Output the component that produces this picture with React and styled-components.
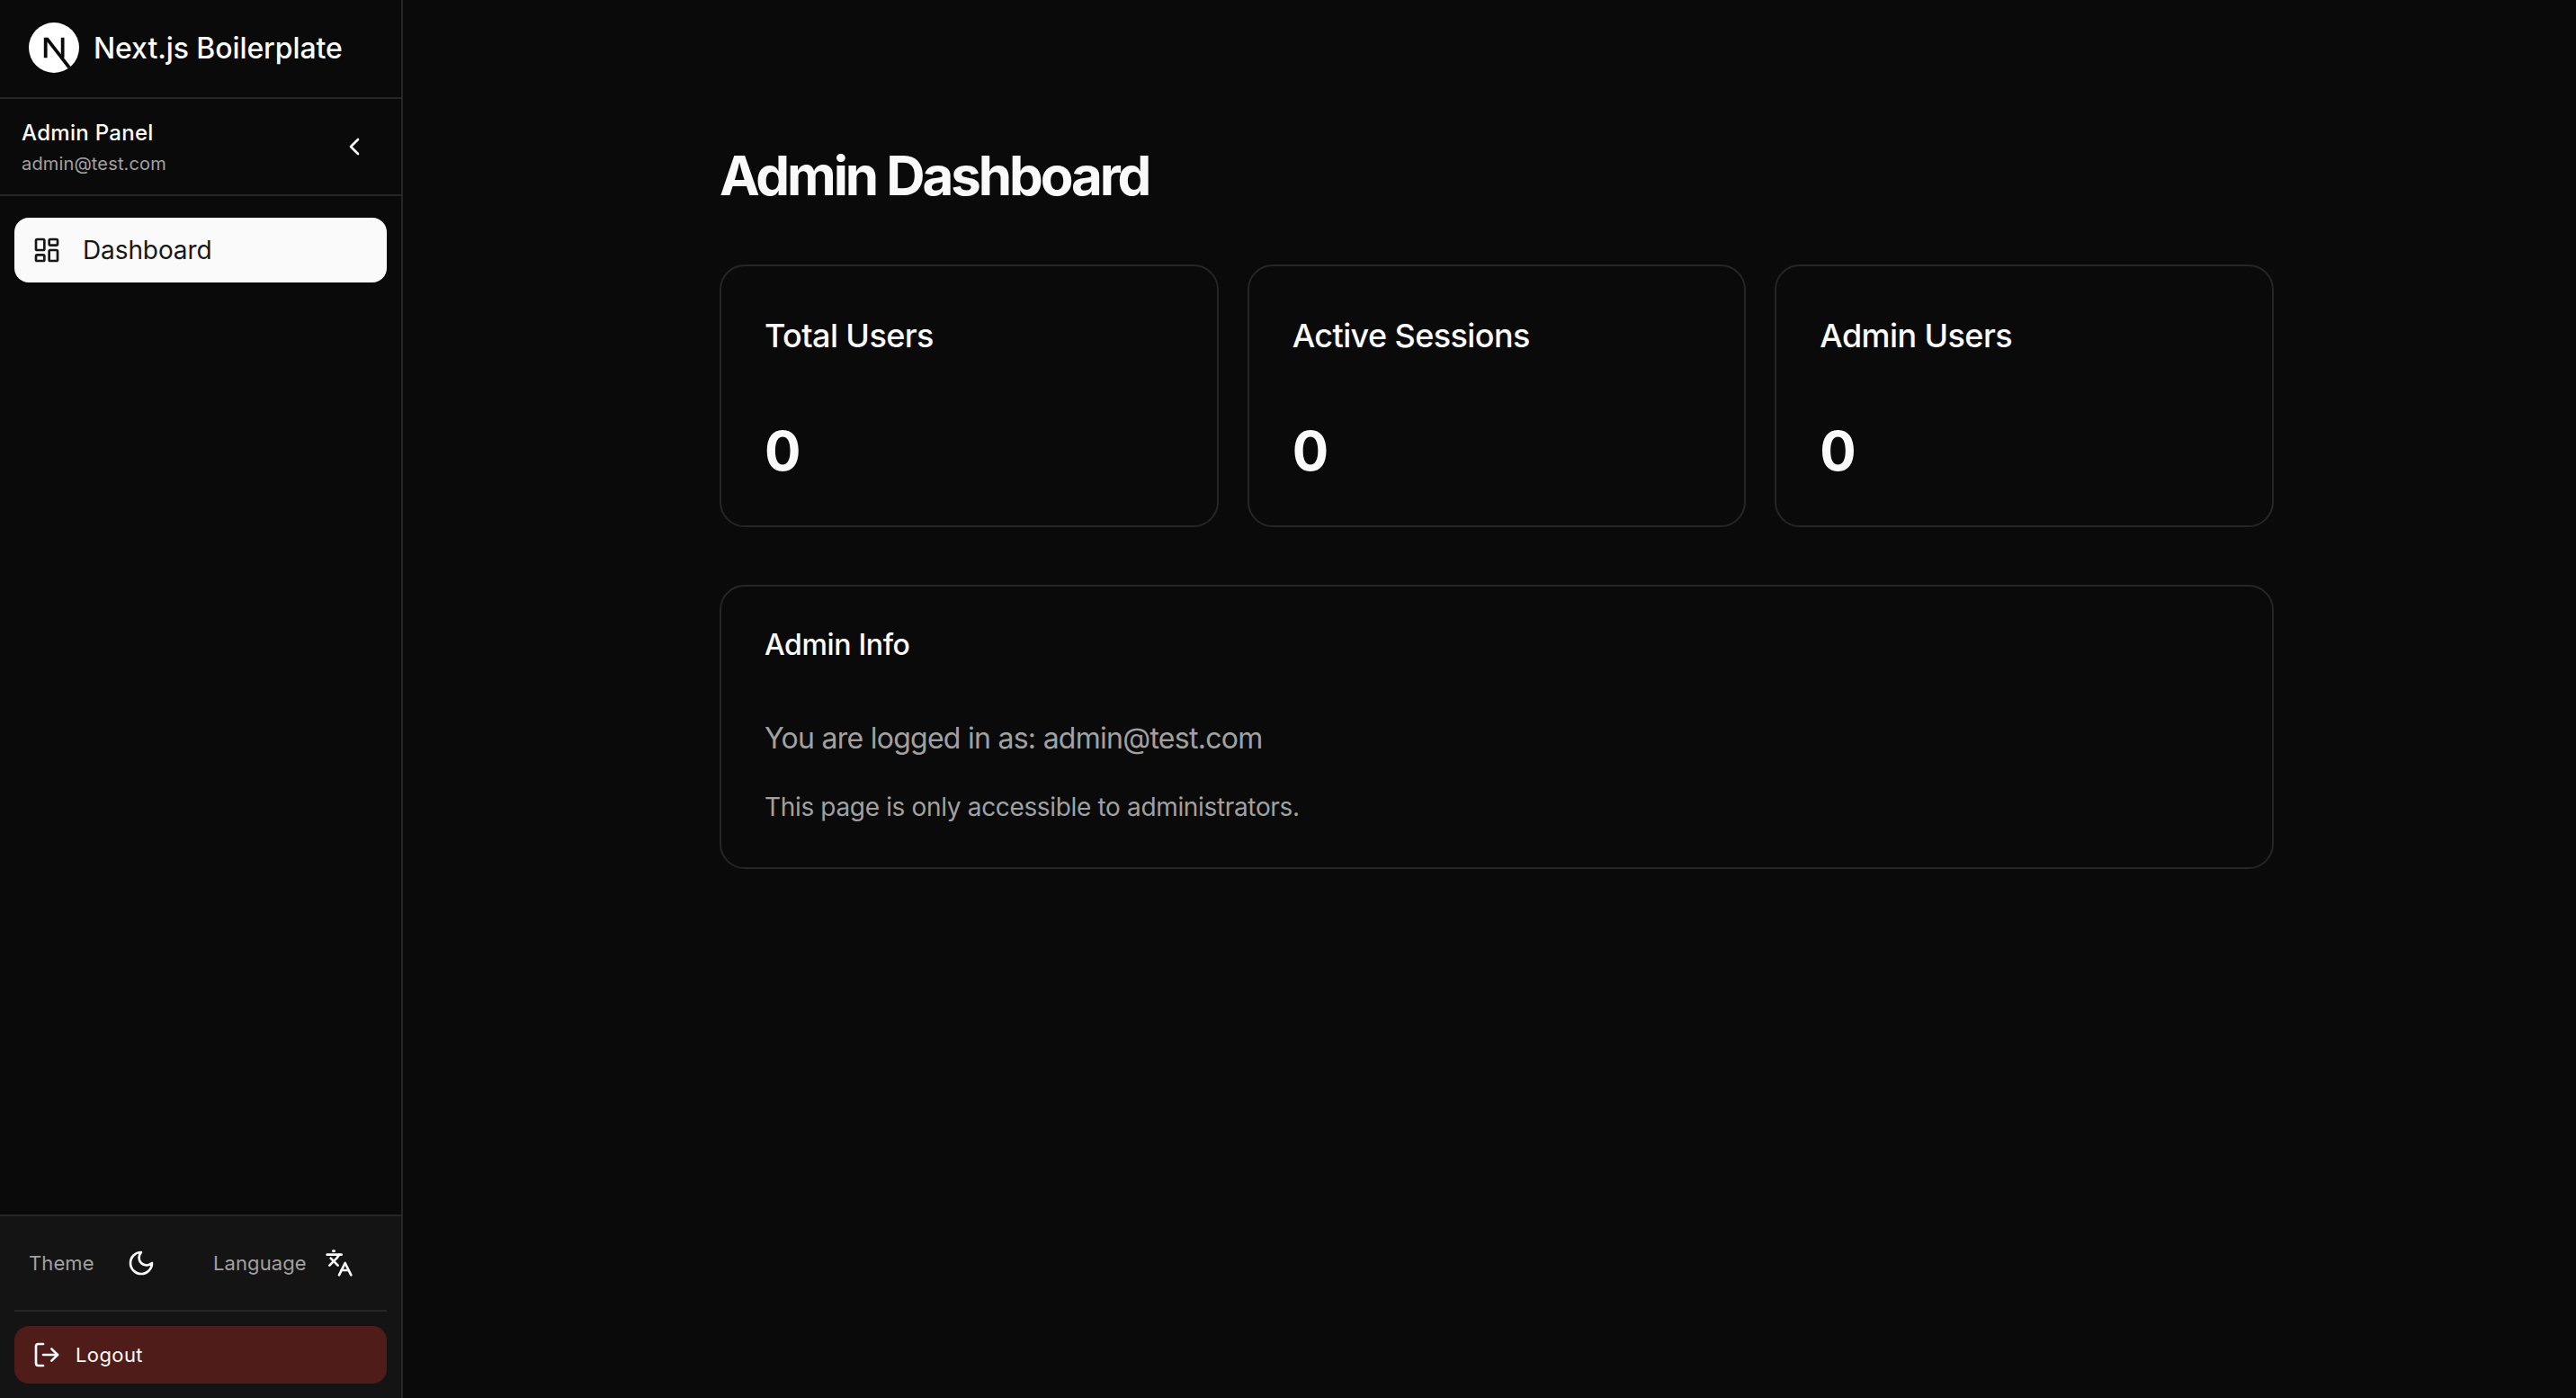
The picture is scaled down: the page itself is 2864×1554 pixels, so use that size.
import React from "react";
import styled, { createGlobalStyle } from "styled-components";
import { ChevronLeft, LayoutDashboard, Languages, LogOut } from "lucide-react";

const Global = createGlobalStyle`
  html, body { margin: 0; padding: 0; background: #0a0a0a; }
  * { box-sizing: border-box; }
  body { font-family: Inter, "Liberation Sans", sans-serif; color: #fafafa; }
`;

const Shell = styled.div`
  display: flex;
  width: 100%;
  height: 1554px;
  background: #0a0a0a;
  overflow: hidden;
`;
const Sidebar = styled.aside`
  width: 448px;
  flex: none;
  display: flex;
  flex-direction: column;
  border-right: 2px solid #262626;
  background: #0a0a0a;
`;
const Brand = styled.div`
  height: 110px;
  display: flex;
  align-items: center;
  gap: 16px;
  padding: 0 32px 2px;
  border-bottom: 2px solid #262626;
`;
const BrandName = styled.span`
  font-size: 32px;
  font-weight: 550;
  letter-spacing: -0.1px;
`;
const UserBox = styled.div`
  height: 108px;
  display: flex;
  align-items: center;
  justify-content: space-between;
  padding: 0 36px 0 24px;
  border-bottom: 2px solid #262626;
`;
const UserText = styled.div`
  display: flex;
  flex-direction: column;
  gap: 4px;
`;
const UserName = styled.span`
  font-size: 24px;
  font-weight: 500;
  line-height: 32px;
  letter-spacing: 0.3px;
  margin-top: 1px;
`;
const UserMail = styled.span`
  font-size: 20px;
  line-height: 28px;
  letter-spacing: 0.15px;
  color: #a1a1a1;
`;
const Nav = styled.nav`
  flex: 1;
  padding: 24px 16px;
`;
const NavItem = styled.div`
  height: 72px;
  display: flex;
  align-items: center;
  gap: 24px;
  padding: 0 20px;
  border-radius: 16px;
  background: #fafafa;
  color: #171717;
  font-size: 28px;
  letter-spacing: -0.1px;
`;
const Footer = styled.div`
  background: #141414;
  border-top: 2px solid #262626;
  padding: 0 16px 16px;
`;
const Prefs = styled.div`
  height: 106px;
  display: flex;
  align-items: center;
  border-bottom: 2px solid #262626;
  padding-left: 16px;
`;
const PrefGroup = styled.div`
  display: flex;
  align-items: center;
  width: ${(p) => p.$w}px;
  gap: ${(p) => p.$gap}px;
`;
const PrefLabel = styled.span`
  font-size: 22px;
  letter-spacing: 0.1px;
  color: #a1a1a1;
`;
const LogoutBtn = styled.div`
  margin-top: 16px;
  height: 64px;
  display: flex;
  align-items: center;
  gap: 16px;
  padding: 0 20px;
  border-radius: 16px;
  background: #501c1a;
  color: #fafafa;
  font-size: 22px;
  font-weight: 400;
  letter-spacing: 0.4px;
`;
const Main = styled.main`
  flex: 1;
  padding: 160px 0 0 352px;
`;
const Content = styled.div`
  width: 1728px;
`;
const Title = styled.h1`
  margin: 0 0 64px;
  font-size: 60px;
  line-height: 70px;
  font-weight: 700;
  letter-spacing: -3.1px;
`;
const Stats = styled.div`
  display: grid;
  grid-template-columns: repeat(3, 1fr);
  gap: 32px;
  margin-bottom: 64px;
`;
const Card = styled.section`
  border: 2px solid #262626;
  border-radius: 28px;
  padding: 48px;
`;
const StatCard = styled(Card)`
  height: 292px;
  padding-top: 53px;
`;
const StatLabel = styled.h2`
  margin: 0 0 68px;
  font-size: 36px;
  line-height: 48px;
  font-weight: 550;
  letter-spacing: -0.6px;
`;
const StatValue = styled.div`
  font-size: 60px;
  line-height: 72px;
  font-weight: 700;
`;
const InfoCard = styled(Card)`
  height: 316px;
  padding-top: 45px;
`;
const InfoTitle = styled.h3`
  margin: 0 0 62px;
  font-size: 32px;
  line-height: 40px;
  font-weight: 550;
  letter-spacing: -0.35px;
`;
const InfoLine = styled.p`
  margin: 0 0 ${(p) => p.$after}px;
  font-size: ${(p) => p.$size}px;
  line-height: ${(p) => p.$lh}px;
  letter-spacing: ${(p) => p.$track}px;
  color: #a1a1a1;
`;

const Logo = () => (
  <svg width="56" height="56" viewBox="0 0 180 180" fill="none">
    <circle cx="90" cy="90" r="90" fill="#fff" />
    <path
      d="M149.508 157.52L69.142 54H54V125.97H66.114V69.384L139.999 164.845C143.333 162.614 146.509 160.165 149.508 157.52Z"
      fill="#0a0a0a"
    />
    <rect x="115" y="54" width="12" height="72" fill="#0a0a0a" />
  </svg>
);

const MoonIcon = () => (
  <svg width="32" height="32" viewBox="0 0 24 24" fill="none" stroke="#fafafa" strokeWidth="2" strokeLinecap="round" strokeLinejoin="round">
    <path d="M12 3a6 6 0 0 0 9 9 9 9 0 1 1-9-9Z" />
  </svg>
);

export default function App() {
  const stats = ["Total Users", "Active Sessions", "Admin Users"];
  return (
    <Shell>
      <Global />
      <Sidebar>
        <Brand>
          <Logo />
          <BrandName>Next.js Boilerplate</BrandName>
        </Brand>
        <UserBox>
          <UserText>
            <UserName>Admin Panel</UserName>
            <UserMail>admin@test.com</UserMail>
          </UserText>
          <ChevronLeft size={32} color="#fafafa" />
        </UserBox>
        <Nav>
          <NavItem>
            <LayoutDashboard size={32} strokeWidth={2} />
            Dashboard
          </NavItem>
        </Nav>
        <Footer>
          <Prefs>
            <PrefGroup $w={205} $gap={36}>
              <PrefLabel>Theme</PrefLabel>
              <MoonIcon />
            </PrefGroup>
            <PrefGroup $w={190} $gap={20}>
              <PrefLabel>Language</PrefLabel>
              <Languages size={32} color="#fafafa" />
            </PrefGroup>
          </Prefs>
          <LogoutBtn>
            <LogOut size={32} />
            Logout
          </LogoutBtn>
        </Footer>
      </Sidebar>
      <Main>
        <Content>
          <Title>Admin Dashboard</Title>
          <Stats>
            {stats.map((s) => (
              <StatCard key={s}>
                <StatLabel>{s}</StatLabel>
                <StatValue>0</StatValue>
              </StatCard>
            ))}
          </Stats>
          <InfoCard>
            <InfoTitle>Admin Info</InfoTitle>
            <InfoLine $size={32} $lh={44} $track={-0.73} $after={34}>You are logged in as: admin@test.com</InfoLine>
            <InfoLine $size={28} $lh={40} $track={-0.34} $after={0}>This page is only accessible to administrators.</InfoLine>
          </InfoCard>
        </Content>
      </Main>
    </Shell>
  );
}
